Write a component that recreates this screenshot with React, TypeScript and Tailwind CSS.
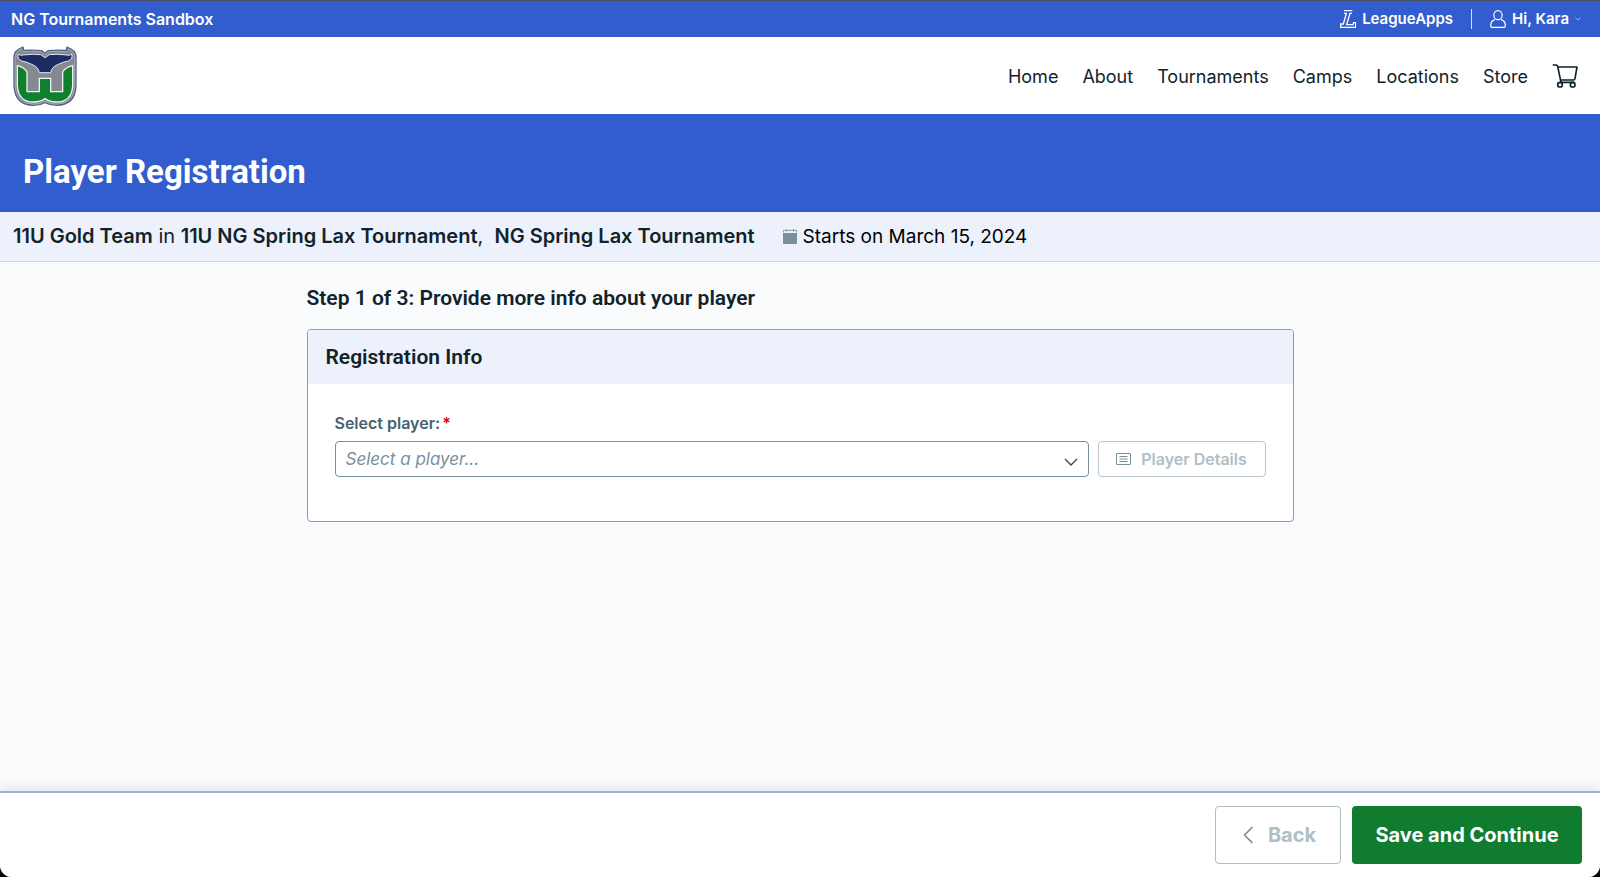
import { ReactNode, useState } from "react";

const navLinks = ["Home", "About", "Tournaments", "Camps", "Locations", "Store"];

const ClubLogo = () => (
  <svg viewBox="38 46 192 180" className="h-[60px] w-16" aria-hidden="true">
    {/* Shield */}
    <path
      d="M69 47L72 57Q100 55 125 58L134 65L143 58Q168 55 196 57L199 47Q228 58 229 76V165Q227 225 168 226Q148 226 134 218Q120 226 100 226Q42 225 39 165V76Q40 58 69 47Z"
      fill="#4f5f8a"
    />
    <path
      d="M64 54L69 63Q100 60 123 63L134 71L145 63Q168 60 199 63L204 54Q223 62 224 78V165Q222 220 168 221Q148 221 134 212Q120 221 100 221Q46 220 44 165V78Q45 62 64 54Z"
      fill="#848a90"
      stroke="#c3c8d0"
      strokeWidth="2"
    />
    {/* W */}
    <path
      d="M51 105Q72 110 80 124V183H117V143H151V183H187V124Q195 110 217 105V165Q214 214 168 214Q148 214 134 204Q120 214 100 214Q54 214 51 165Z"
      fill="#10802f"
      stroke="#eef3ee"
      strokeWidth="4"
    />
    {/* Tail */}
    <path
      d="M54 70Q60 76 68 73Q100 69 121 72L134 81L147 72Q168 69 200 73Q208 76 214 70Q219 84 204 91Q190 93 174 101Q154 108 151 126H117Q114 108 94 101Q78 93 64 91Q49 84 54 70Z"
      fill="#1e2c66"
      stroke="#e2e5ee"
      strokeWidth="3"
    />
  </svg>
);

const LeagueAppsIcon = () => (
  <svg viewBox="0 0 48 54" className="h-[18px] w-4" fill="none" stroke="currentColor" strokeWidth="4" aria-hidden="true">
    <path d="M12 2H37M12 10H19L10 42H2V52H47V38H41L39 44H20L30 10H36" />
  </svg>
);

const UserIcon = () => (
  <svg viewBox="0 0 46 52" className="h-[18px] w-4" fill="none" stroke="currentColor" strokeWidth="3.5" aria-hidden="true">
    <ellipse cx="23" cy="15" rx="12" ry="13" />
    <path d="M14 28Q2 32 2 44V46Q2 50 6 50H40Q44 50 44 46V44Q44 32 32 28" />
  </svg>
);

const CartIcon = () => (
  <svg viewBox="0 0 78 72" className="h-6 w-[26px]" fill="none" stroke="currentColor" strokeWidth="5" strokeLinejoin="round" aria-hidden="true">
    <path d="M2 3H13Q16 3 17 7L27 55M19 9H75L69 44Q68 48 64 48H26M25 55H67" />
    <circle cx="24" cy="62" r="7" />
    <circle cx="62" cy="62" r="7" />
  </svg>
);

const CalendarIcon = () => (
  <svg viewBox="0 0 36 44" className="h-[15px] w-[14px]" preserveAspectRatio="none" fill="#78909c" aria-hidden="true">
    <path d="M0 12H36V42Q36 44 34 44H2Q0 44 0 42Z" />
    <path d="M1 10V4H35V10M9 0V7M27 0V7" fill="none" stroke="#78909c" strokeWidth="2.5" />
  </svg>
);

const DetailsIcon = () => (
  <svg viewBox="0 0 15 12" className="h-3 w-[15px]" fill="none" stroke="#78909c" aria-hidden="true">
    <rect x="0.5" y="0.5" width="14" height="11" rx="0.5" />
    <path d="M3.5 3.5H11.5M3.5 6H11.5M3.5 8.5H11.5" />
  </svg>
);

interface ChevronProps {
  d: string;
  className: string;
}

const Chevron = ({ d, className }: ChevronProps) => (
  <svg viewBox="0 0 16 16" className={className} fill="none" stroke="currentColor" strokeWidth="1.4" aria-hidden="true">
    <path d={d} />
  </svg>
);

interface CardProps {
  title: string;
  children: ReactNode;
}

const Card = ({ title, children }: CardProps) => (
  <section className="overflow-hidden rounded border border-[#7f98e2] bg-white">
    <h3 className="bg-[#edf1fb] px-[18px] py-3 font-['Roboto',sans-serif] text-[21px] leading-[30px] font-semibold">
      {title}
    </h3>
    <div className="px-[27px] pt-[29px] pb-11">{children}</div>
  </section>
);

export default function App() {
  const [player, setPlayer] = useState("");

  return (
    <div className="min-h-screen bg-black font-['Inter',sans-serif] text-[#10232b]">
      <div className="flex min-h-screen flex-col overflow-hidden rounded-b-xl border-t border-[#4b4e5c] bg-[#fafbfd]">
        {/* Top bar */}
        <div className="flex h-9 items-center justify-between bg-[#315dce] pr-[19px] pl-[11px] font-semibold text-white">
          <span className="text-base">NG Tournaments Sandbox</span>
          <div className="flex items-center text-[15px]">
            <a href="#" className="flex items-center gap-1.5">
              <LeagueAppsIcon />
              LeagueApps
            </a>
            <span className="mx-[18px] h-5 w-px bg-white/80" />
            <button type="button" className="flex items-center gap-1.5">
              <UserIcon />
              Hi, Kara
              <Chevron d="M1 4L8 11L15 4" className="h-1.5 w-1.5" />
            </button>
          </div>
        </div>

        {/* Site header */}
        <header className="flex h-[77px] items-center justify-between bg-white pr-[22px] pl-[13px]">
          <a href="#" aria-label="Club home">
            <ClubLogo />
          </a>
          <nav className="flex items-center gap-6 text-lg">
            {navLinks.map((link) => (
              <a key={link} href="#" className="pt-0.5">
                {link}
              </a>
            ))}
            <a href="#" aria-label="Cart">
              <CartIcon />
            </a>
          </nav>
        </header>

        <div className="bg-[#315dce] px-[23px] pt-[38px] pb-5">
          <h1 className="font-['Roboto',sans-serif] text-[33px] leading-10 font-bold text-white">
            Player Registration
          </h1>
        </div>

        <div className="flex items-center border-b border-[#c9d5f5] bg-[#edf1fb] px-[13px] py-[9px] text-xl leading-[31px]">
          <p>
            <strong className="font-semibold">11U Gold Team</strong> in{" "}
            <strong className="font-semibold">11U NG Spring Lax Tournament</strong>,&nbsp;{" "}
            <strong className="font-semibold">NG Spring Lax Tournament</strong>
          </p>
          <p className="ml-7 flex items-center gap-1.5 text-[19px] text-black">
            <CalendarIcon />
            Starts on March 15, 2024
          </p>
        </div>

        {/* Registration form */}
        <main className="mx-auto w-full max-w-[987px] grow">
          <h2 className="pt-5 pb-[15px] font-['Roboto',sans-serif] text-[21px] leading-8 font-semibold">
            Step 1 of 3: Provide more info about your player
          </h2>
          <Card title="Registration Info">
            <label htmlFor="player" className="mb-2 block text-base leading-5 font-semibold text-[#47626e]">
              Select player:
              <span className="ml-0.5 text-[#e80000]">*</span>
            </label>
            <div className="flex gap-[9px]">
              <div className="relative grow">
                <select
                  id="player"
                  value={player}
                  onChange={(e) => setPlayer(e.target.value)}
                  className="h-9 w-full appearance-none rounded border border-[#78909c] bg-white px-2.5 text-[17px] leading-6 text-[#78909c] italic"
                >
                  <option value="">Select a player...</option>
                </select>
                <Chevron
                  d="M2 5L8 11L14 5"
                  className="pointer-events-none absolute right-[10px] bottom-[7px] h-4 w-4 text-[#37474f]"
                />
              </div>
              <button
                type="button"
                disabled
                className="flex h-9 w-[168px] items-center justify-center gap-2.5 rounded border border-[#b9c5cb] font-semibold text-[#b0bec5]"
              >
                <DetailsIcon />
                Player Details
              </button>
            </div>
          </Card>
        </main>

        {/* Actions */}
        <footer className="flex justify-end gap-[11px] border-t-2 border-[#9dafe0] bg-white pt-[13px] pr-[18px] pb-[13px] text-xl font-bold shadow-[0_-2px_12px_rgba(0,0,0,0.1)]">
          <button
            type="button"
            disabled
            className="flex h-[58px] w-[126px] items-center justify-center gap-2.5 rounded border border-[#b0bec5] text-[#b0bec5]"
          >
            <Chevron d="M11 1L4 8L11 15" className="h-[18px] w-[18px] text-[#78909c]" />
            Back
          </button>
          <button type="button" className="h-[58px] w-[230px] rounded bg-[#107c2f] text-white">
            Save and Continue
          </button>
        </footer>
      </div>
    </div>
  );
}
